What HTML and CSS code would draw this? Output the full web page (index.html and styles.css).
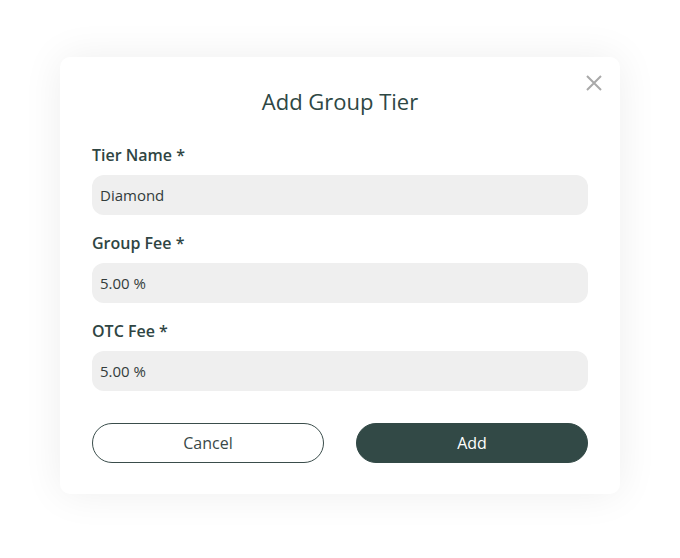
FILE: index.html
```html
<!DOCTYPE html>
<html>
<head>
<meta charset="utf-8">
<link rel="stylesheet" href="styles.css">
</head>
<body>
<div class="stage">
  <div class="modal">
    <button class="close" aria-label="Close">
      <svg width="16" height="16" viewBox="0 0 16 16"><path d="M1 1L15 15M15 1L1 15" stroke="#a9a9a9" stroke-width="2" fill="none"/></svg>
    </button>
    <h2 class="title">Add Group Tier</h2>
    <div class="fields">
      <div class="field">
        <label class="label">Tier Name *</label>
        <div class="input">Diamond</div>
      </div>
      <div class="field">
        <label class="label">Group Fee *</label>
        <div class="input">5.00 %</div>
      </div>
      <div class="field">
        <label class="label">OTC Fee *</label>
        <div class="input">5.00 %</div>
      </div>
    </div>
    <div class="actions">
      <button class="btn btn-outline">Cancel</button>
      <button class="btn btn-solid">Add</button>
    </div>
  </div>
</div>
</body>
</html>
```
FILE: styles.css
```css
* { box-sizing: border-box; }
html, body { margin: 0; padding: 0; background: #ffffff; }
body { font-family: "Open Sans", "Noto Sans", sans-serif; color: #2f4543; }
.stage { width: 680px; height: 558px; padding: 57px 60px 0 60px; }
.modal {
  position: relative;
  width: 560px;
  height: 437px;
  background: #fff;
  border-radius: 10px;
  box-shadow: 0 0 40px rgba(0,0,0,0.07);
  padding: 29px 32px 32px 32px;
}
.close {
  position: absolute;
  top: 18px;
  right: 18px;
  background: none;
  border: 0;
  padding: 0;
  width: 16px;
  height: 16px;
  cursor: pointer;
}
.close svg { display: block; }
.title {
  margin: 0;
  text-align: center;
  font-size: 22px;
  font-weight: 400;
  line-height: 30px;
  color: #2e4744;
}
.fields {
  display: flex;
  flex-direction: column;
  gap: 18px;
  margin-top: 29px;
}
.label {
  display: block;
  font-size: 16px;
  font-weight: 600;
  line-height: 20px;
  margin-bottom: 10px;
  color: #2f4543;
}
.input {
  height: 40px;
  border-radius: 12px;
  background: #efefef;
  padding: 0 8px;
  font-size: 15px;
  line-height: 40px;
  color: #333c3b;
}
.actions {
  display: flex;
  gap: 32px;
  margin-top: 32px;
}
.btn {
  flex: 1;
  height: 40px;
  border-radius: 20px;
  font-family: "Open Sans", "Noto Sans", sans-serif;
  font-size: 16px;
  cursor: pointer;
}
.btn-outline {
  background: #fff;
  border: 1px solid #3a4d4b;
  color: #3a4948;
}
.btn-solid {
  background: #324946;
  border: 1px solid #324946;
  color: #ffffff;
}
```
